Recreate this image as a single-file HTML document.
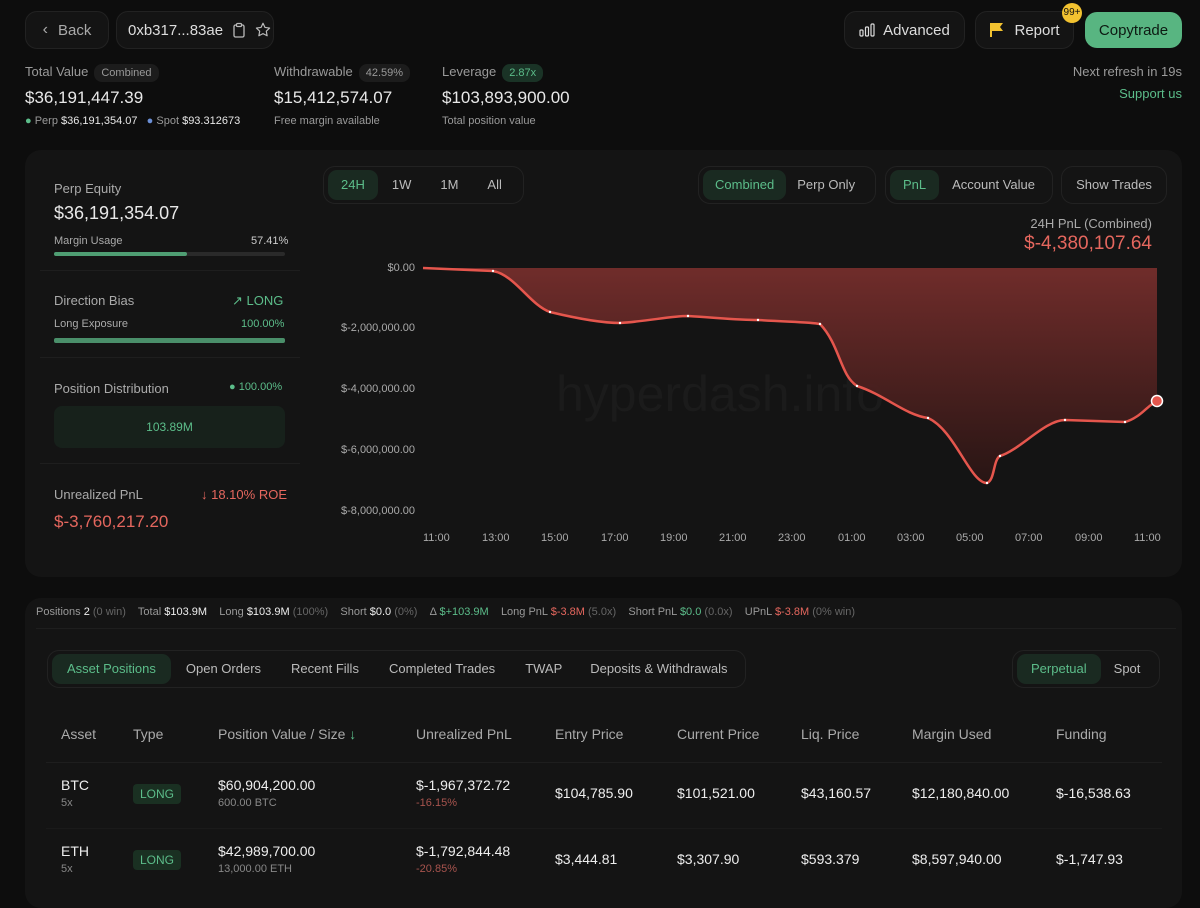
<!DOCTYPE html>
<html><head><meta charset="utf-8"><style>
*{box-sizing:border-box;margin:0;padding:0}
body{width:1200px;height:895px;overflow:hidden;background:#0d0d0d;font-family:"Liberation Sans",sans-serif;color:#e8e8e8;position:relative}
.a{position:absolute;white-space:nowrap}
.btn{position:absolute;border:1px solid #222;background:#141414;border-radius:12px;display:flex;align-items:center;justify-content:center;font-size:15px;color:#ddd}
.pill{display:inline-block;border-radius:8px;background:#1c1c1c;color:#999;font-size:11px;padding:3px 7px;margin-left:6px}
.g{color:#5cbd8a}.r{color:#e5675e}.m{color:#9a9a9a}
.panel{position:absolute;background:#141414;border-radius:16px}
.seg{position:absolute;border:1px solid #222;border-radius:12px;display:flex;align-items:center;padding:4px;font-size:13px;color:#bbb;white-space:nowrap}
.seg span{padding:0 13px;height:30px;line-height:30px;border-radius:9px;white-space:nowrap;flex:none}
.seg .on{background:#1a2a21;color:#5cbd8a}
.bar{position:absolute;height:4px;border-radius:2px;background:#2a2a2a}
.sep{position:absolute;height:1px;background:#1e1e1e;left:40px;width:260px}
.yl{position:absolute;right:785px;font-size:11px;color:#aaa}
.xl{position:absolute;top:532px;font-size:11px;color:#aaa}
.th{position:absolute;top:726px;font-size:14px;color:#aaa}
.td{position:absolute;font-size:14px;color:#eee}
.sm{font-size:11px;color:#888}
.lg{position:absolute;background:#1a3022;color:#5cbd8a;font-size:12px;padding:3px 7px;border-radius:4px}
</style></head><body>
<div class="btn" style="left:25px;top:11px;width:84px;height:38px;color:#aaa"><span style="margin-right:10px;font-size:16px">&#8249;</span>Back</div>
<div class="btn" style="left:116px;top:11px;width:158px;height:38px;justify-content:flex-start;padding-left:11px">0xb317...83ae
<svg width="14" height="16" style="margin-left:9px" viewBox="0 0 14 16"><rect x="2" y="3" width="10" height="12" rx="1.5" fill="none" stroke="#bbb" stroke-width="1.3"/><rect x="4.5" y="1.5" width="5" height="3" rx="1" fill="#141414" stroke="#bbb" stroke-width="1.2"/></svg>
<svg width="18" height="18" style="margin-left:8px" viewBox="0 0 24 24"><path d="M12 3l2.7 5.6 6.1.8-4.4 4.2 1.1 6.1L12 16.8l-5.5 2.9 1.1-6.1L3.2 9.4l6.1-.8z" fill="none" stroke="#bbb" stroke-width="1.6" stroke-linejoin="round"/></svg></div>

<div class="btn" style="left:844px;top:11px;width:121px;height:38px"><svg width="16" height="14" style="margin-right:8px" viewBox="0 0 16 14"><rect x="1" y="7" width="3" height="6" rx="1" fill="none" stroke="#ddd" stroke-width="1.2"/><rect x="6.5" y="4" width="3" height="9" rx="1" fill="none" stroke="#ddd" stroke-width="1.2"/><rect x="12" y="1" width="3" height="12" rx="1" fill="none" stroke="#ddd" stroke-width="1.2"/></svg>Advanced</div>
<div class="btn" style="left:975px;top:11px;width:99px;height:38px"><svg width="16" height="16" style="margin-right:9px" viewBox="0 0 16 16"><path d="M1 1h13l-3 4 3 4H3v6H1z" fill="#f2c230"/></svg>Report</div>
<div class="a" style="left:1062px;top:3px;width:20px;height:20px;border-radius:10px;background:#f2c230;color:#111;font-size:10px;text-align:center;line-height:20px">99+</div>
<div class="btn" style="left:1085px;top:12px;width:97px;height:36px;background:#58b581;border:none;color:#0d1a12">Copytrade</div>

<div class="a m" style="left:25px;top:64px;font-size:13px">Total Value<span class="pill">Combined</span></div>
<div class="a" style="left:25px;top:88px;font-size:17px">$36,191,447.39</div>
<div class="a" style="left:25px;top:115px;font-size:11px"><span class="g">●</span> <span class="m">Perp</span> $36,191,354.07 &nbsp; <span style="color:#6b8fd6">●</span> <span class="m">Spot</span> $93.312673</div>
<div class="a m" style="left:274px;top:64px;font-size:13px">Withdrawable<span class="pill">42.59%</span></div>
<div class="a" style="left:274px;top:88px;font-size:17px">$15,412,574.07</div>
<div class="a m" style="left:274px;top:115px;font-size:11px">Free margin available</div>
<div class="a m" style="left:442px;top:64px;font-size:13px">Leverage<span class="pill" style="background:#1a3326;color:#5cbd8a">2.87x</span></div>
<div class="a" style="left:442px;top:88px;font-size:17px">$103,893,900.00</div>
<div class="a m" style="left:442px;top:115px;font-size:11px">Total position value</div>
<div class="a m" style="right:18px;top:64px;font-size:13px">Next refresh in 19s</div>
<div class="a g" style="right:18px;top:86px;font-size:13px">Support us</div>

<div class="panel" style="left:25px;top:150px;width:1157px;height:427px"></div>
<div class="a" style="left:54px;top:181px;font-size:13px;color:#aaa">Perp Equity</div>
<div class="a" style="left:54px;top:203px;font-size:18px">$36,191,354.07</div>
<div class="a" style="left:54px;top:235px;font-size:11px;color:#aaa">Margin Usage</div>
<div class="a" style="left:251px;top:235px;font-size:11px;color:#ccc">57.41%</div>
<div class="bar" style="left:54px;top:252px;width:231px"></div><div class="bar" style="left:54px;top:252px;width:133px;background:#4f9e73"></div>
<div class="sep" style="top:270px"></div>
<div class="a" style="left:54px;top:293px;font-size:13px;color:#aaa">Direction Bias</div>
<div class="a g" style="left:232px;top:293px;font-size:13px">↗ LONG</div>
<div class="a" style="left:54px;top:318px;font-size:11px;color:#aaa">Long Exposure</div>
<div class="a g" style="left:241px;top:318px;font-size:11px">100.00%</div>
<div class="bar" style="left:54px;top:338px;width:231px;height:5px;background:#4a8f6a"></div>
<div class="sep" style="top:357px"></div>
<div class="a" style="left:54px;top:381px;font-size:13px;color:#aaa">Position Distribution</div>
<div class="a g" style="left:229px;top:381px;font-size:11px">● 100.00%</div>
<div class="a g" style="left:54px;top:406px;width:231px;height:42px;border-radius:8px;background:#17211b;text-align:center;line-height:42px;font-size:12px">103.89M</div>
<div class="sep" style="top:463px"></div>
<div class="a" style="left:54px;top:487px;font-size:13px;color:#aaa">Unrealized PnL</div>
<div class="a r" style="left:201px;top:487px;font-size:13px">↓ 18.10% ROE</div>
<div class="a r" style="left:54px;top:512px;font-size:17px">$-3,760,217.20</div>

<div class="seg" style="left:323px;top:166px;height:38px;width:201px"><span class="on" style="padding:0 13px">24H</span><span style="padding:0 14px">1W</span><span style="padding:0 15px">1M</span><span style="padding:0 14px">All</span></div>
<div class="seg" style="left:698px;top:166px;height:38px;width:178px"><span class="on" style="padding:0 12px">Combined</span><span style="padding:0 11px">Perp Only</span></div>
<div class="seg" style="left:885px;top:166px;height:38px;width:168px"><span class="on">PnL</span><span>Account Value</span></div>
<div class="seg" style="left:1061px;top:166px;height:38px;width:106px;justify-content:center"><span style="padding:0">Show Trades</span></div>
<div class="a" style="right:48px;top:216px;font-size:13px;color:#aaa">24H PnL (Combined)</div>
<div class="a r" style="right:48px;top:233px;font-size:19px">$-4,380,107.64</div>

<div class="yl" style="top:262px">$0.00</div>
<div class="yl" style="top:322px">$-2,000,000.00</div>
<div class="yl" style="top:383px">$-4,000,000.00</div>
<div class="yl" style="top:444px">$-6,000,000.00</div>
<div class="yl" style="top:505px">$-8,000,000.00</div>
<div class="a" style="left:556px;top:365px;font-size:50px;color:#1b1b1b">hyperdash.info</div>
<svg class="a" style="left:0;top:0" width="1200" height="600">
<defs><linearGradient id="gr" x1="0" y1="0" x2="0" y2="1"><stop offset="0" stop-color="#7a2f2d"/><stop offset="1" stop-color="#2a1514"/></linearGradient></defs>
<path d="M423 268 L493 271 C515 275 530 305 550 312 C575 318 600 323 620 323 C650 321 670 316 688 316 C720 318 740 320 758 320 C790 322 810 322 820 324 C840 345 840 375 857 386 C885 395 905 415 928 418 C955 430 970 483 987 483 C995 480 993 460 1000 456 C1020 450 1045 420 1065 420 L1125 422 C1140 418 1148 405 1157 401 L1157 268 Z" fill="url(#gr)" opacity="0.9"/>
<path d="M423 268 L493 271 C515 275 530 305 550 312 C575 318 600 323 620 323 C650 321 670 316 688 316 C720 318 740 320 758 320 C790 322 810 322 820 324 C840 345 840 375 857 386 C885 395 905 415 928 418 C955 430 970 483 987 483 C995 480 993 460 1000 456 C1020 450 1045 420 1065 420 L1125 422 C1140 418 1148 405 1157 401" fill="none" stroke="#e5564d" stroke-width="2.5"/>
<g fill="#fff"><circle cx="493" cy="271" r="1.2"/><circle cx="550" cy="312" r="1.2"/><circle cx="620" cy="323" r="1.2"/><circle cx="688" cy="316" r="1.2"/><circle cx="758" cy="320" r="1.2"/><circle cx="820" cy="324" r="1.2"/><circle cx="857" cy="386" r="1.2"/><circle cx="928" cy="418" r="1.2"/><circle cx="987" cy="483" r="1.2"/><circle cx="1000" cy="456" r="1.2"/><circle cx="1065" cy="420" r="1.2"/><circle cx="1125" cy="422" r="1.2"/></g>
<circle cx="1157" cy="401" r="5.5" fill="#e5564d" stroke="#fff" stroke-width="1.5"/>
</svg>
<div class="xl" style="left:423px">11:00</div><div class="xl" style="left:482px">13:00</div><div class="xl" style="left:541px">15:00</div><div class="xl" style="left:601px">17:00</div><div class="xl" style="left:660px">19:00</div><div class="xl" style="left:719px">21:00</div><div class="xl" style="left:778px">23:00</div><div class="xl" style="left:838px">01:00</div><div class="xl" style="left:897px">03:00</div><div class="xl" style="left:956px">05:00</div><div class="xl" style="left:1015px">07:00</div><div class="xl" style="left:1075px">09:00</div><div class="xl" style="left:1134px">11:00</div>

<div class="panel" style="left:25px;top:598px;width:1157px;height:310px"></div>
<div class="a" style="left:36px;top:606px;font-size:11px;color:#999">Positions <span style="color:#eee">2</span> <span style="color:#666">(0 win)</span> &nbsp;&nbsp; Total <span style="color:#eee">$103.9M</span> &nbsp;&nbsp; Long <span style="color:#eee">$103.9M</span> <span style="color:#666">(100%)</span> &nbsp;&nbsp; Short <span style="color:#eee">$0.0</span> <span style="color:#666">(0%)</span> &nbsp;&nbsp; Δ <span class="g">$+103.9M</span> &nbsp;&nbsp; Long PnL <span class="r">$-3.8M</span> <span style="color:#666">(5.0x)</span> &nbsp;&nbsp; Short PnL <span class="g">$0.0</span> <span style="color:#666">(0.0x)</span> &nbsp;&nbsp; UPnL <span class="r">$-3.8M</span> <span style="color:#666">(0% win)</span></div>
<div class="a" style="left:36px;top:628px;width:1140px;height:1px;background:#1e1e1e"></div>
<div class="seg" style="left:47px;top:650px;height:38px"><span class="on" style="padding:0 15px">Asset Positions</span><span style="padding:0 15px">Open Orders</span><span style="padding:0 15px">Recent Fills</span><span style="padding:0 15px">Completed Trades</span><span style="padding:0 15px">TWAP</span><span style="padding:0 13px">Deposits &amp; Withdrawals</span></div>
<div class="seg" style="left:1012px;top:650px;height:38px;width:148px"><span class="on" style="padding:0 14px">Perpetual</span><span>Spot</span></div>

<div class="th" style="left:61px">Asset</div><div class="th" style="left:133px">Type</div><div class="th" style="left:218px">Position Value / Size <span class="g">↓</span></div><div class="th" style="left:416px">Unrealized PnL</div><div class="th" style="left:555px">Entry Price</div><div class="th" style="left:677px">Current Price</div><div class="th" style="left:801px">Liq. Price</div><div class="th" style="left:912px">Margin Used</div><div class="th" style="left:1056px">Funding</div>
<div class="a" style="left:46px;top:762px;width:1116px;height:1px;background:#1e1e1e"></div>
<div class="a" style="left:46px;top:828px;width:1116px;height:1px;background:#1a1a1a"></div>

<div class="td" style="left:61px;top:777px">BTC<br><span class="sm">5x</span></div>
<div class="lg" style="left:133px;top:784px">LONG</div>
<div class="td" style="left:218px;top:777px">$60,904,200.00<br><span class="sm">600.00 BTC</span></div>
<div class="td r" style="left:416px;top:777px">$-1,967,372.72<br><span style="font-size:11px;color:#a8544e">-16.15%</span></div>
<div class="td" style="left:555px;top:785px">$104,785.90</div><div class="td" style="left:677px;top:785px">$101,521.00</div><div class="td" style="left:801px;top:785px">$43,160.57</div><div class="td" style="left:912px;top:785px">$12,180,840.00</div><div class="td r" style="left:1056px;top:785px">$-16,538.63</div>

<div class="td" style="left:61px;top:843px">ETH<br><span class="sm">5x</span></div>
<div class="lg" style="left:133px;top:850px">LONG</div>
<div class="td" style="left:218px;top:843px">$42,989,700.00<br><span class="sm">13,000.00 ETH</span></div>
<div class="td r" style="left:416px;top:843px">$-1,792,844.48<br><span style="font-size:11px;color:#a8544e">-20.85%</span></div>
<div class="td" style="left:555px;top:851px">$3,444.81</div><div class="td" style="left:677px;top:851px">$3,307.90</div><div class="td" style="left:801px;top:851px">$593.379</div><div class="td" style="left:912px;top:851px">$8,597,940.00</div><div class="td r" style="left:1056px;top:851px">$-1,747.93</div>
</body></html>
